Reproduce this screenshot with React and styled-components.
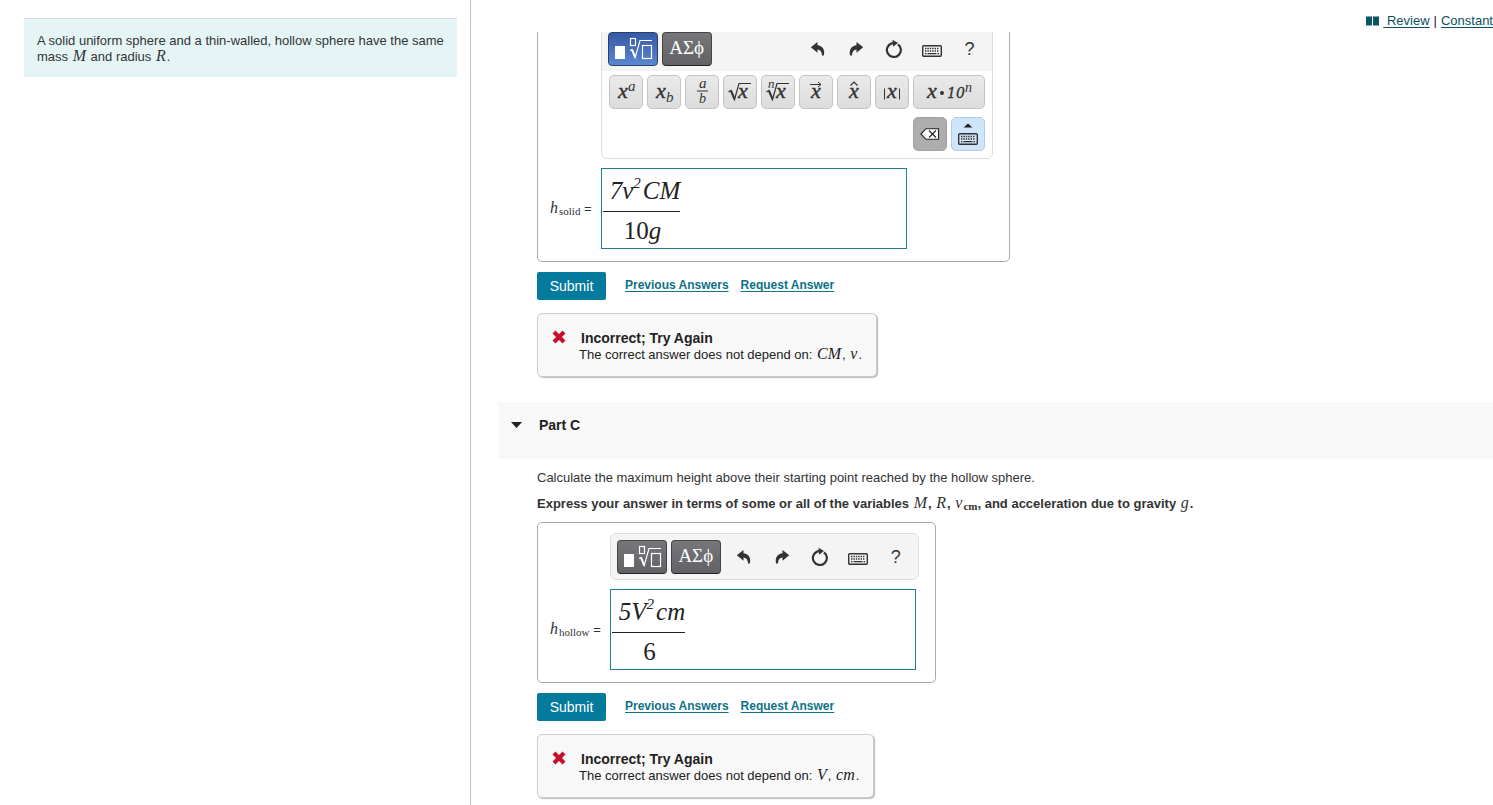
import React from 'react';
import styled, { createGlobalStyle, css } from 'styled-components';

const sans = '"Liberation Sans", Arial, sans-serif';
const serif = '"Liberation Serif", "Times New Roman", serif';

const GlobalStyle = createGlobalStyle`
  *, *::before, *::after { box-sizing: border-box; }
  body { margin: 0; background: #fff; color: #333; font: 13px/16px ${sans}; }
  p, h2 { margin: 0; }
  button { font: inherit; color: inherit; padding: 0; border: 0; cursor: pointer; }
`;

const Page = styled.div`
  display: flex;
  height: 100vh;
  overflow: hidden;
`;

const Sidebar = styled.aside`
  flex: 0 0 471px;
  padding: 18px 13px 0 24px;
  border-right: 1px solid #b4c8d2;
`;

const Problem = styled.div`
  padding: 14px 8px 12px 13px;
  background: #e5f5f6;
  border-top: 1px solid #d0e0e2;
`;

const Main = styled.main`
  flex: 1;
  min-width: 0;
  display: flex;
  flex-direction: column;
`;

const TopBar = styled.nav`
  display: flex;
  flex: 0 0 32px;
  justify-content: flex-end;
  align-items: center;
  gap: 4px;
  padding-top: 9px;
  white-space: pre;
  color: #222;
`;

const TopLink = styled.a`
  color: #0b4f5e;
  text-decoration: underline;
  text-underline-offset: 2px;
`;

const ScrollArea = styled.div`
  flex: 1;
  min-height: 0;
  overflow: hidden;
`;

const Sections = styled.div`
  margin-top: -18px;
`;

const Section = styled.section`
  padding-left: 66px;
`;

const PartHeader = styled.header`
  display: flex;
  align-items: flex-start;
  gap: 17px;
  height: 57px;
  margin: 25px 0 11px 27px;
  padding: 15px 13px 0;
  background: #f8f8f8;
`;

const PartTitle = styled.h2`
  font-size: 14px;
  line-height: 16px;
  color: #222;
`;

const Caret = styled.button`
  width: 11px;
  height: 6px;
  margin-top: 5px;
  background: #222;
  clip-path: polygon(0 0, 100% 0, 50% 100%);
`;

const Statement = styled.p`
  line-height: 16px;
  margin-bottom: 10px;
  font-weight: ${(p) => (p.$bold ? 'bold' : 'normal')};
`;

const Var = styled.i`
  margin: 0 1px;
  font-family: ${serif};
  font-size: 16px;
  line-height: 14px;
  font-weight: normal;
`;

const Sub = styled.sub`
  font-family: ${serif};
  font-size: 11px;
  line-height: 8px;
  font-style: normal;
  font-weight: ${(p) => (p.$bold ? 'bold' : 'normal')};
  vertical-align: -2px;
`;

const AnswerBox = styled.div`
  display: grid;
  grid-template-columns: auto auto;
  justify-content: start;
  align-items: center;
  column-gap: 9px;
  row-gap: 9px;
  width: fit-content;
  padding: 10px 16px 12px 11px;
  border: 1px solid #aaa;
  border-radius: 5px;
`;

const AnswerLabel = styled.label`
  white-space: nowrap;
`;

const Editor = styled.div`
  grid-column: 2;
  border: 1px solid #ddd;
  border-radius: 6px;
  background: #fff;
  overflow: hidden;
`;

const Toolbar = styled.div`
  display: flex;
  align-items: center;
  gap: 4px;
  padding: 6px 3px 5px 6px;
  background: #f4f4f4;
`;

const ModeButton = styled.button`
  display: grid;
  place-items: center;
  width: 50px;
  height: 34px;
  padding-bottom: 2px;
  border: 1px solid #444;
  border-bottom-color: #222;
  border-radius: 4px;
  color: #fff;
  font: 19px/24px ${serif};
  background: linear-gradient(#77777b, #626266);
  ${(p) => p.$active && css`
    border-color: #26406e;
    background: linear-gradient(#3559a5, #5b86d0);
  `}
`;

const Tools = styled.div`
  display: flex;
  margin-left: auto;
`;

const ToolButton = styled.button`
  display: grid;
  place-items: center;
  width: 38px;
  height: 34px;
  padding-bottom: 1px;
  background: none;
  color: #333;
  font-size: 18px;
`;

const Palette = styled.div`
  display: grid;
  grid-template-columns: repeat(8, 34px) 34px 34px;
  gap: 8px 4px;
  padding: 4px 7px 7px;
`;

const keyTones = {
  plain: css`background: linear-gradient(#eaeaea, #dcdcdc); border-color: #c4c4c4;`,
  dark: css`background: #adadad; border-color: #a2a2a2;`,
  blue: css`background: #cfe5fb; border-color: #b4cbe2;`,
};

const Key = styled.button`
  display: grid;
  place-items: center;
  height: 34px;
  border: 1px solid;
  border-radius: 5px;
  color: #333;
  ${(p) => keyTones[p.$tone || 'plain']}
  ${(p) => p.$wide && css`grid-column: span 2;`}
  ${(p) => p.$first && css`grid-column: 9;`}
`;

const MathField = styled.div`
  width: 306px;
  height: 81px;
  padding: 5px 1px;
  border: 1px solid #1f7d90;
  background: #fff;
  color: #222;
  font: 25px/34px ${serif};
`;

const Fraction = styled.div`
  display: inline-grid;
  justify-items: center;
`;

const Numerator = styled.div`
  display: flex;
  height: 38px;
  padding: 0 0 4px 7px;
  border-bottom: 1px solid #222;
  font-style: italic;
`;

const Denominator = styled.div`
  padding: 2px 0 0 2px;
  line-height: 34px;
`;

const Power = styled.sup`
  margin-right: 2px;
  font-size: 15px;
  line-height: 18px;
`;

const Actions = styled.div`
  display: flex;
  align-items: center;
  gap: 12px;
  margin: 10px 0 13px;
`;

const Submit = styled.button`
  width: 69px;
  height: 28px;
  margin-right: 7px;
  border-radius: 2px;
  background: #047a9c;
  color: #fff;
  font-size: 14px;
`;

const ActionLink = styled.a`
  padding-bottom: 2px;
  color: #0d7286;
  font-size: 12px;
  font-weight: bold;
  text-decoration: underline;
  text-underline-offset: 2px;
`;

const Feedback = styled.div`
  display: flex;
  gap: 13px;
  width: fit-content;
  padding: 16px 14px 12px;
  border: 1px solid #ccc;
  border-radius: 5px;
  background: #f8f8f8;
  box-shadow: 1px 1px 1px #bbb;
  color: #222;
`;

const FeedbackTitle = styled.p`
  padding-left: 2px;
  font-size: 14px;
  font-weight: bold;
`;

const FeedbackText = styled.p`
  line-height: 18px;
`;

const Glyphs = styled.svg`
  display: block;
  font-family: ${serif};
  font-style: italic;
  fill: #333;
`;

const Letter = styled.text`
  font-size: 22px;
  stroke: #333;
  stroke-width: 0.4px;
`;

const Line = (p) => <path fill="none" stroke="currentColor" strokeWidth="1.2" {...p} />;

const Radical = () => (
  <>
    <Line d="M4.500 16l2.500-1.500 3.500 9L15 7.500h12" />
    <Line d="M7 15l3.500 8" strokeWidth="2" />
  </>
);

const BookIcon = () => (
  <svg width="13" height="12" viewBox="0 0 13 12" fill="#0b5566" aria-hidden="true">
    <path d="M0 1.500H6V10.500H0ZM7 1.500H13V10.500H7Z" />
  </svg>
);

const TemplateIcon = () => (
  <svg width="40" height="26" viewBox="0 0 40 26" fill="none" stroke="#fff" strokeWidth="1.200" aria-hidden="true">
    <rect x="2" y="11" width="10" height="13" fill="#fff" stroke="none" />
    <rect x="17.500" y="3.500" width="5" height="7" />
    <path d="M17 15.500l2-1 3.200 8L27 5.500h12" />
    <path d="M19 14.500l3.200 8" strokeWidth="2" />
    <rect x="29.500" y="10.500" width="9" height="13" />
  </svg>
);

const UndoIcon = ({ flip }) => (
  <svg width="16" height="16" viewBox="0 0 16 16" fill="#333" aria-hidden="true">
    <path transform={flip ? 'translate(16 0) scale(-1 1)' : undefined} d="M.8 6.300L7.500 1v3.200C12 4.500 15.500 8.500 13.800 14.500h-1.800C11.900 10.500 10 8.700 7.500 8.500v3.200Z" />
  </svg>
);

const ResetIcon = () => (
  <svg width="18" height="20" viewBox="0 0 18 20" aria-hidden="true">
    <path d="M13 5.300A7 7 0 1 1 6.500 4.400L9 4" fill="none" stroke="#333" strokeWidth="2.200" />
    <path d="M7.500.8l5.500 3.200-5 3.800Z" fill="#333" />
  </svg>
);

const KeyboardIcon = ({ popup }) => (
  <svg width="20" height={popup ? 22 : 16} viewBox={popup ? '0 -10 20 22' : '0 -4 20 16'} aria-hidden="true">
    {popup && <path d="M10-9.500L14.500-5.500H5.500Z" fill="#222" />}
    <rect x=".7" y=".7" width="18.600" height="10.600" rx="1" fill="none" stroke="#333" strokeWidth="1.400" />
    <path d="M3 3.500h14M3 6h14" stroke="#333" strokeWidth="1.300" strokeDasharray="1.400 1" />
    <path d="M3 8.700h1.500M5.500 8.700h9M15.500 8.700h1.500" stroke="#333" strokeWidth="1.300" />
  </svg>
);

const BackspaceIcon = () => (
  <svg width="20" height="12" viewBox="0 0 20 12" stroke="#222" strokeWidth="1.100" aria-hidden="true">
    <path d="M1 6L6 .7h12.500v10.600H6Z" fill="#fff" />
    <path d="M9 2.500l7 7M16 2.500l-7 7" />
  </svg>
);

const CrossIcon = () => (
  <svg width="14" height="14" viewBox="0 0 14 14" aria-hidden="true">
    <path d="M2 2l10 10M12 2L2 12" stroke="#c8102e" strokeWidth="4.200" />
  </svg>
);

const keys = [
  ['Superscript', <><Letter x="8" y="22">x</Letter><text x="18" y="15" fontSize="15">a</text></>],
  ['Subscript', <><Letter x="8" y="22">x</Letter><text x="18" y="26" fontSize="15">b</text></>],
  ['Fraction', <><text x="13" y="12" fontSize="15">a</text><Line d="M11 15h11" /><text x="13" y="27" fontSize="14">b</text></>],
  ['Square root', <><Letter x="14" y="22">x</Letter><Radical /></>],
  ['Nth root', <><text x="6" y="12" fontSize="13">n</text><Letter x="14" y="22">x</Letter><Radical /></>],
  ['Vector', <><Letter x="11" y="22">x</Letter><Line d="M10 8.500h11M18 6l3 2.500-3 2.500" strokeWidth="1" /></>],
  ['Unit vector', <><Letter x="11" y="22">x</Letter><Line d="M12.500 9.500l3.500-3.500 3.500 3.500" /></>],
  ['Absolute value', <><Letter x="11" y="22">x</Letter><Line d="M8.500 12.500v11M23.500 12.500v11" strokeWidth="1" /></>],
];

function MathEditor({ expanded }) {
  return (
    <Editor>
      <Toolbar role="toolbar" aria-label="Equation tools">
        <ModeButton $active={expanded} aria-label="Templates"><TemplateIcon /></ModeButton>
        <ModeButton>ΑΣϕ</ModeButton>
        <Tools>
          <ToolButton aria-label="Undo"><UndoIcon /></ToolButton>
          <ToolButton aria-label="Redo"><UndoIcon flip /></ToolButton>
          <ToolButton aria-label="Reset"><ResetIcon /></ToolButton>
          <ToolButton aria-label="Keyboard shortcuts"><KeyboardIcon /></ToolButton>
          <ToolButton>?</ToolButton>
        </Tools>
      </Toolbar>
      {expanded && (
        <Palette>
          {keys.map(([name, glyph]) => (
            <Key key={name} aria-label={name}>
              <Glyphs width="32" height="32" viewBox="0 0 32 32">{glyph}</Glyphs>
            </Key>
          ))}
          <Key $wide aria-label="Scientific notation">
            <Glyphs width="70" height="32" viewBox="0 0 70 32">
              <Letter x="13" y="22">x</Letter>
              <circle cx="28" cy="17" r="2" />
              <text x="33" y="22" fontSize="14" fontFamily="DejaVu Serif" stroke="#333" strokeWidth="0.300">10</text>
              <text x="51" y="16" fontSize="14">n</text>
            </Glyphs>
          </Key>
          <Key $first $tone="dark" aria-label="Delete"><BackspaceIcon /></Key>
          <Key $tone="blue" aria-label="Show keyboard"><KeyboardIcon popup /></Key>
        </Palette>
      )}
    </Editor>
  );
}

function Answer({ id, subscript, expanded, numerator, denominator, extra }) {
  return (
    <>
      <AnswerBox>
        <MathEditor expanded={expanded} />
        <AnswerLabel id={id}><Var>h</Var><Sub>{subscript}</Sub> =</AnswerLabel>
        <MathField role="textbox" tabIndex={0} aria-labelledby={id}>
          <Fraction>
            <Numerator>{numerator}</Numerator>
            <Denominator>{denominator}</Denominator>
          </Fraction>
        </MathField>
      </AnswerBox>
      <Actions>
        <Submit>Submit</Submit>
        <ActionLink href="#previous">Previous Answers</ActionLink>
        <ActionLink href="#request">Request Answer</ActionLink>
      </Actions>
      <Feedback>
        <CrossIcon />
        <div>
          <FeedbackTitle>Incorrect; Try Again</FeedbackTitle>
          <FeedbackText>The correct answer does not depend on: {extra}.</FeedbackText>
        </div>
      </Feedback>
    </>
  );
}

export default function App() {
  return (
    <Page>
      <GlobalStyle />
      <Sidebar>
        <Problem>
          A solid uniform sphere and a thin-walled, hollow sphere have the same
          mass <Var>M</Var> and radius <Var>R</Var>.
        </Problem>
      </Sidebar>
      <Main>
        <TopBar>
          <BookIcon />
          <TopLink href="#review"> Review</TopLink>
          <span>|</span>
          <TopLink href="#constants">Constant</TopLink>
        </TopBar>
        <ScrollArea>
          <Sections>
            <Section>
              <Answer
                id="h-solid"
                subscript="solid"
                expanded
                numerator={<>7v<Power>2</Power>CM</>}
                denominator={<>10<i>g</i></>}
                extra={<><Var>CM</Var>, <Var>v</Var></>}
              />
            </Section>
            <PartHeader>
              <Caret aria-label="Collapse Part C" />
              <PartTitle>Part C</PartTitle>
            </PartHeader>
            <Section>
              <Statement>Calculate the maximum height above their starting point reached by the hollow sphere.</Statement>
              <Statement $bold>
                Express your answer in terms of some or all of the variables <Var>M</Var>, <Var>R</Var>,{' '}
                <Var>v</Var><Sub $bold>cm</Sub>, and acceleration due to gravity <Var>g</Var>.
              </Statement>
              <Answer
                id="h-hollow"
                subscript="hollow"
                numerator={<>5V<Power>2</Power>cm</>}
                denominator="6"
                extra={<><Var>V</Var>, <Var>cm</Var></>}
              />
            </Section>
          </Sections>
        </ScrollArea>
      </Main>
    </Page>
  );
}
